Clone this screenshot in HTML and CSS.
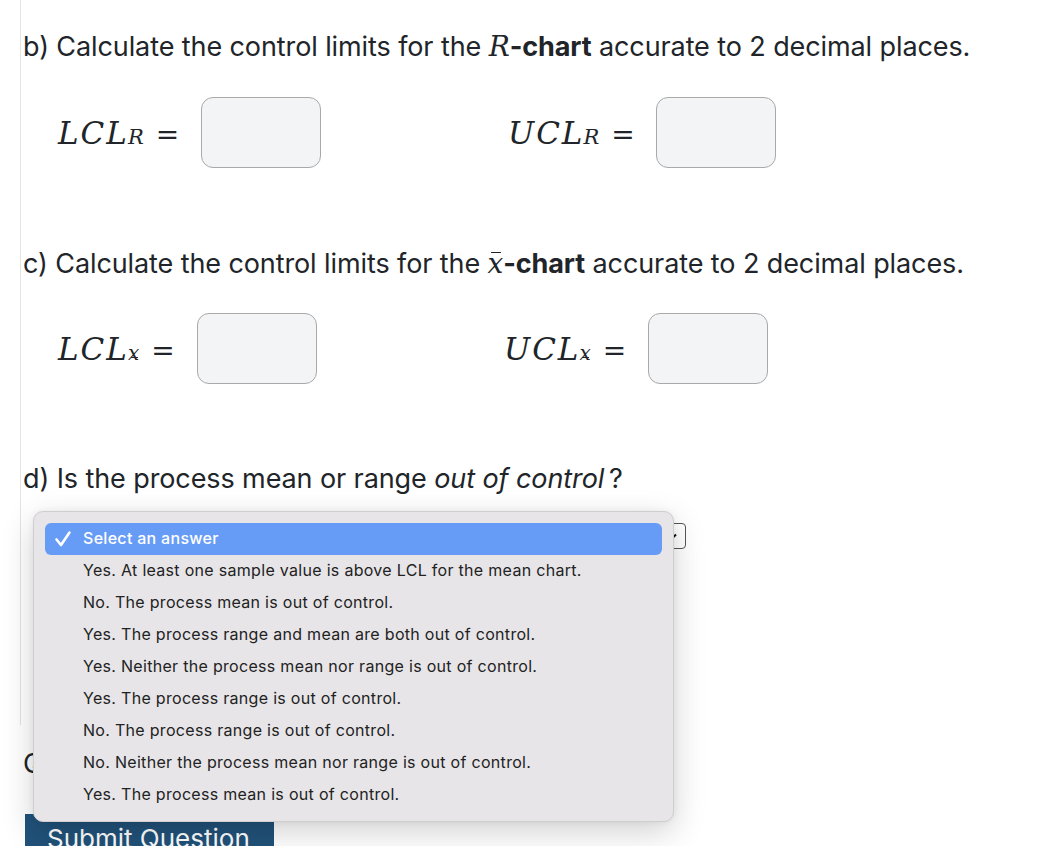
FILE: index.html
```html
<!DOCTYPE html>
<html>
<head>
<meta charset="utf-8">
<link rel="stylesheet" href="styles.css">
</head>
<body>
<div class="page">
  <section class="part">
    <h2 class="q q-b">b) Calculate the control limits for the <span class="mi">R</span><b>-chart</b> accurate to 2 decimal places.</h2>
    <div class="row row-b">
      <div class="cell cell-l">
        <span class="math"><span class="mi">LCL</span><sub class="mi">R</sub><span class="eq">=</span></span>
        <span class="box"></span>
      </div>
      <div class="cell cell-r">
        <span class="math"><span class="mi">UCL</span><sub class="mi">R</sub><span class="eq">=</span></span>
        <span class="box"></span>
      </div>
    </div>

    <h2 class="q q-c">c) Calculate the control limits for the <span class="mi xbar">x</span><b>-chart</b> accurate to 2 decimal places.</h2>
    <div class="row row-c">
      <div class="cell cell-l2">
        <span class="math"><span class="mi">LCL</span><sub class="mi xbar">x</sub><span class="eq">=</span></span>
        <span class="box"></span>
      </div>
      <div class="cell cell-r2">
        <span class="math"><span class="mi">UCL</span><sub class="mi xbar">x</sub><span class="eq">=</span></span>
        <span class="box"></span>
      </div>
    </div>

    <h2 class="q q-d">d) Is the process mean or range <i>out of control</i>&#8201;?</h2>
    <div class="select">
      <span class="sel-text">Select an answer</span>
      <svg class="chev" width="12" height="8" viewBox="0 0 12 8"><path d="M1 1.5 L6 6.5 L11 1.5" fill="none" stroke="#111" stroke-width="2"/></svg>
    </div>
  </section>

  <h2 class="help">Question Help:</h2>
  <button class="submit">Submit Question</button>

  <div class="menu">
    <div class="item active"><svg class="check" width="18" height="18" viewBox="0 0 18 18"><path d="M2.5 9.5 L7 15 L15.5 2.5" fill="none" stroke="#fff" stroke-width="2.6" stroke-linecap="round" stroke-linejoin="round"/></svg>Select an answer</div>
    <div class="item">Yes. At least one sample value is above LCL for the mean chart.</div>
    <div class="item">No. The process mean is out of control.</div>
    <div class="item">Yes. The process range and mean are both out of control.</div>
    <div class="item">Yes. Neither the process mean nor range is out of control.</div>
    <div class="item">Yes. The process range is out of control.</div>
    <div class="item">No. The process range is out of control.</div>
    <div class="item">No. Neither the process mean nor range is out of control.</div>
    <div class="item">Yes. The process mean is out of control.</div>
  </div>
</div>
</body>
</html>
```

FILE: styles.css
```css
html, body {
  margin: 0;
  padding: 0;
  background: #fff;
}
body {
  font-family: Inter, "Noto Sans", sans-serif;
  color: #212529;
  overflow: hidden;
  height: 846px;
}
.page {
  position: relative;
  padding-left: 20px;
}
.part {
  border-left: 1px solid #e3e3e3;
  padding-left: 2px;
  padding-top: 29px;
  height: 696px;
  box-sizing: content-box;
}
.q {
  margin: 0;
  font-size: 27px;
  font-weight: 400;
  line-height: 36px;
  letter-spacing: -0.1px;
  white-space: nowrap;
}
.q b { font-weight: 700; }
.q i { font-style: italic; }
.mi {
  font-family: "DejaVu Serif", "Liberation Serif", serif;
  font-style: italic;
  font-size: 31px;
}
.q .mi { font-size: 28px; }
.xbar {
  position: relative;
  display: inline-block;
}
.xbar::before {
  content: "";
  position: absolute;
  left: 25%;
  right: 12%;
  top: 0.2em;
  border-top: 1.5px solid #212529;
}
.row {
  display: flex;
  align-items: center;
}
.row-b { margin-top: 32px; }
.row-c { margin-top: 31px; }
.q-c { margin-top: 78px; }
.q-d { margin-top: 77px; }
.cell {
  display: flex;
  align-items: center;
}
.cell-l { margin-left: 35px; width: 450px; }
.cell-l2 { margin-left: 35px; width: 446px; }
.math {
  display: inline-flex;
  align-items: baseline;
  white-space: nowrap;
  letter-spacing: 2px;
}
.math sub {
  font-size: 21px;
  vertical-align: -8px;
  line-height: 0;
  margin-left: -1px;
  letter-spacing: 0;
}
.math sub.xbar { font-size: 20px; }
.eq {
  font-family: "DejaVu Serif", serif;
  font-size: 28px;
  margin: 0 22px 0 12px;
  font-style: normal;
  letter-spacing: 0;
}
.cell-r .eq { margin-right: 21px; }
.box {
  display: block;
  width: 118px;
  height: 69px;
  border: 1px solid #a9a9a9;
  border-radius: 12px;
  background: #f3f4f6;
}
.select {
  margin: 26px 0 0 22px;
  width: 621px;
  height: 24px;
  border: 1px solid #555;
  border-radius: 4px;
  display: flex;
  align-items: center;
  justify-content: space-between;
  padding: 0 8px 0 10px;
  box-sizing: content-box;
  font-size: 15px;
}
.chev { margin-top: 2px; }
.help {
  margin: 21px 0 0 3px;
  font-size: 27px;
  font-weight: 400;
  line-height: 36px;
}
.submit {
  margin: 32px 0 0 5px;
  width: 249px;
  height: 50px;
  background: #21527a;
  color: #fff;
  border: none;
  border-radius: 0;
  font-family: Inter, "Noto Sans", sans-serif;
  font-size: 26px;
  text-align: left;
  padding: 0 0 0 22px;
  line-height: 50px;
  display: block;
  white-space: nowrap;
}
.menu {
  position: absolute;
  left: 33px;
  top: 511px;
  width: 617px;
  height: 287px;
  padding: 11px;
  background: #e7e5e8;
  border: 1px solid #cfcdd0;
  border-radius: 10px;
  box-shadow: 0 10px 32px rgba(0,0,0,0.18), 0 0 6px rgba(0,0,0,0.06);
  font-family: Inter, "Noto Sans", sans-serif;
  font-size: 16px;
  color: #222;
  box-sizing: content-box;
}
.item {
  height: 32px;
  line-height: 31px;
  padding-left: 38px;
  border-radius: 6px;
  white-space: nowrap;
  letter-spacing: 0.3px;
  position: relative;
}
.item.active {
  background: #679cf6;
  color: #fff;
  font-weight: 500;
}
.check {
  position: absolute;
  left: 9px;
  top: 7px;
}
```
